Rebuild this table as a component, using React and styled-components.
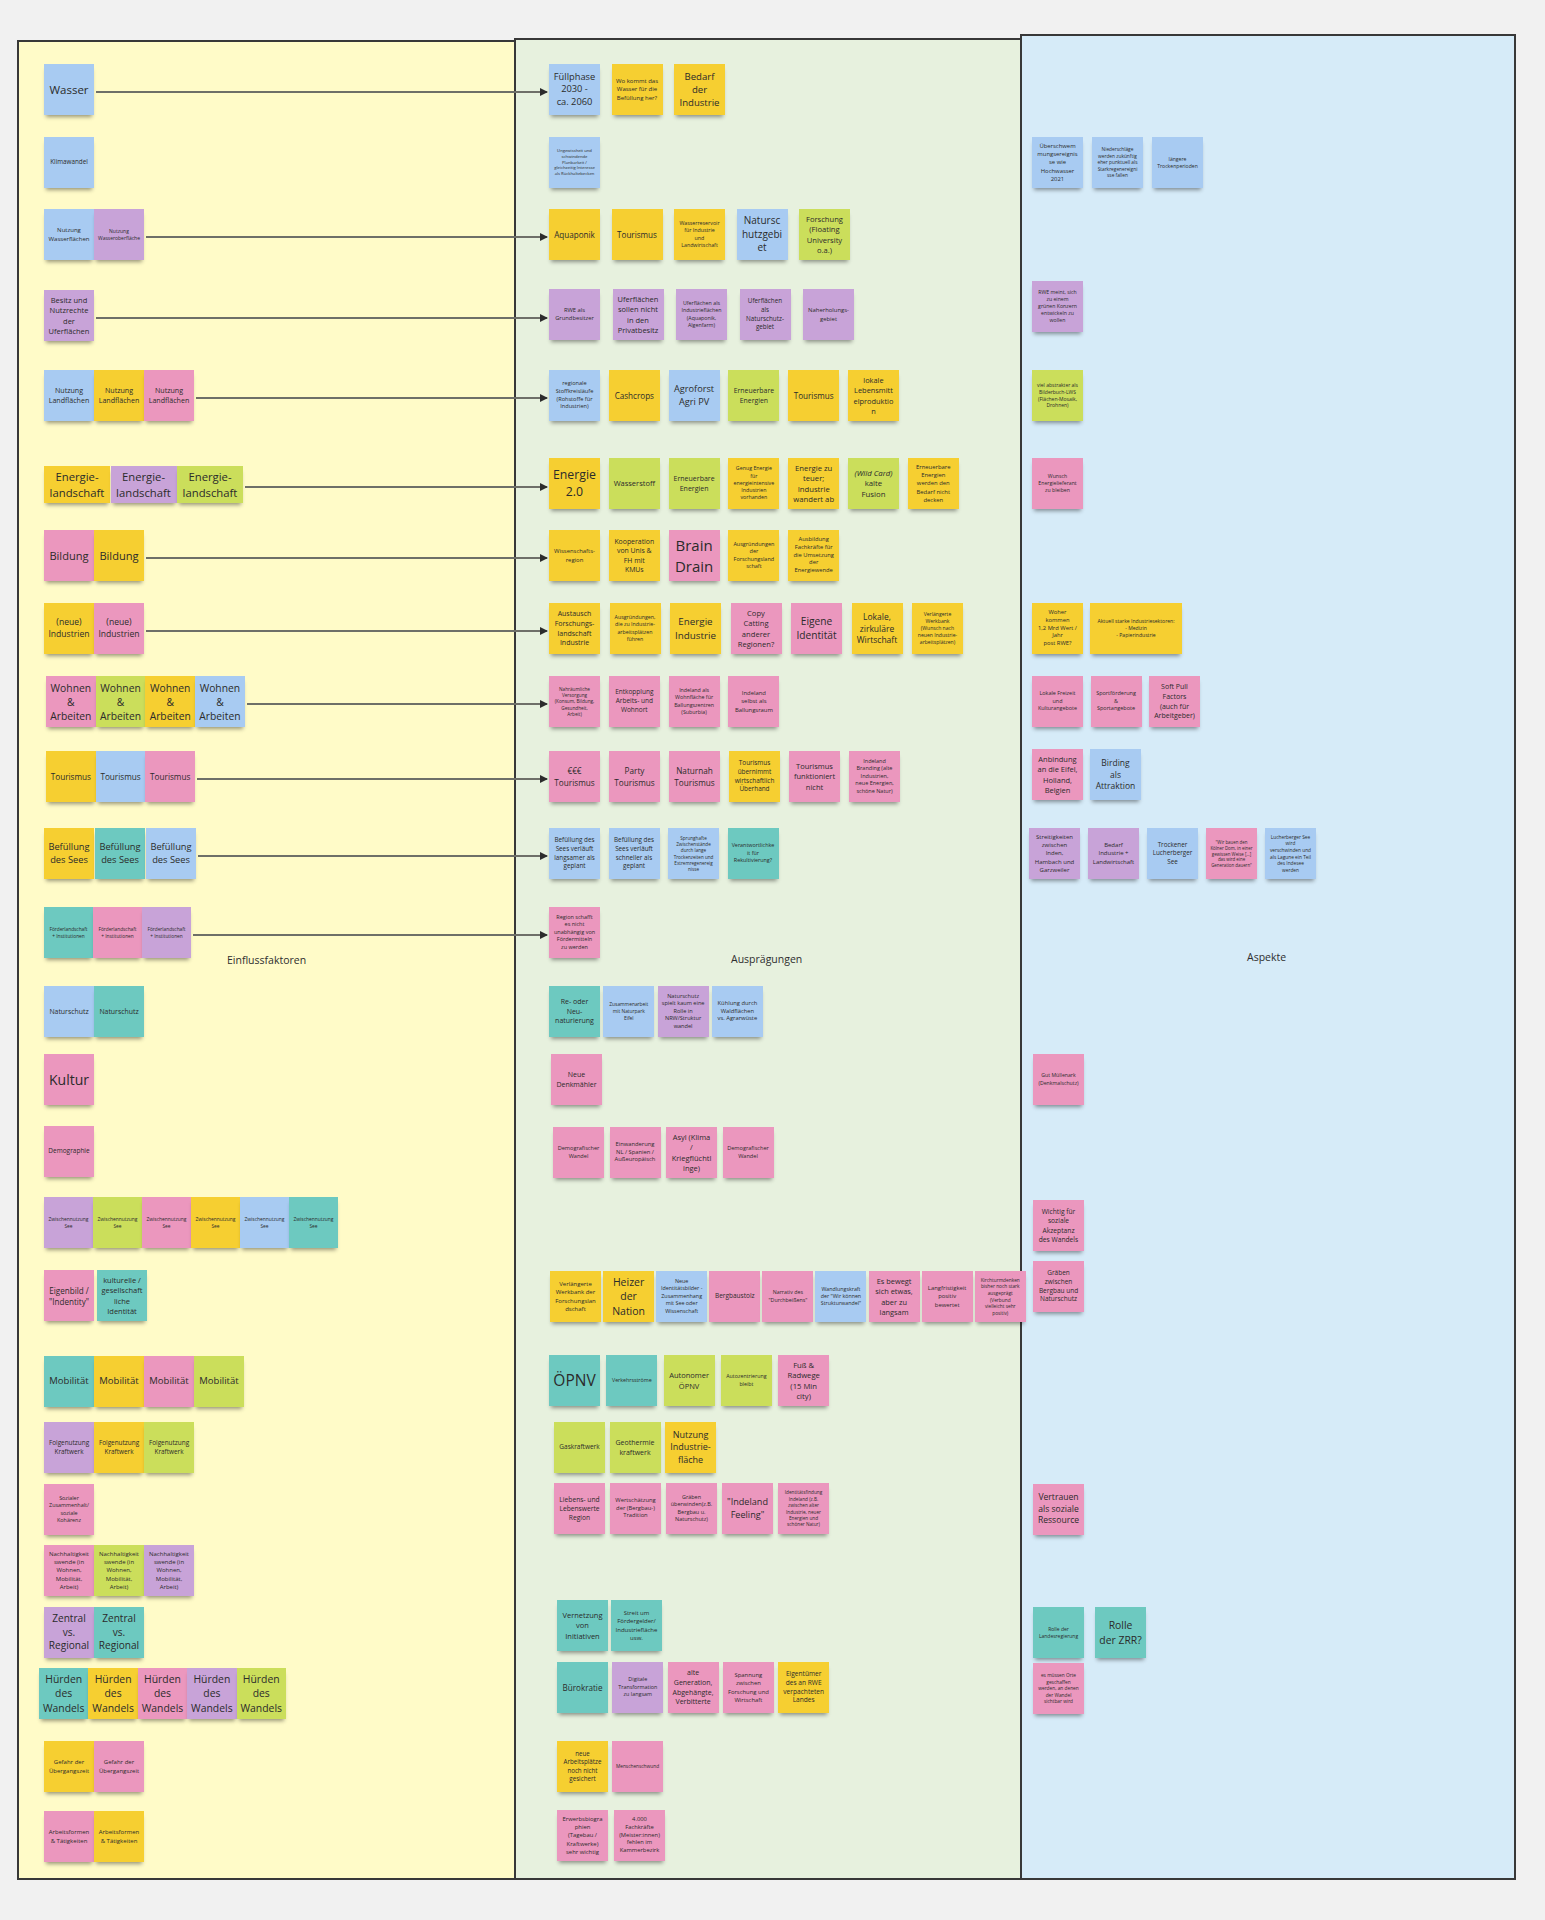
import React from 'react';
import styled, { createGlobalStyle } from 'styled-components';

const GlobalStyle = createGlobalStyle`
  html, body { margin: 0; padding: 0; background: #f1f1f1; }
  body { font-family: "Open Sans", "Noto Sans", sans-serif; }
  *, *::before, *::after { box-sizing: border-box; }
`;

const COLORS = {
  blue: '#a8cbf2',
  yellow: '#f6cf31',
  pink: '#eb97be',
  purple: '#c8a3d8',
  green: '#cbde5b',
  teal: '#6dc9c0',
};

const SLOTS = [64, 137, 209, 289, 370, 458, 530, 603, 676, 751, 828, 907, 986, 1054, 1126, 1197, 1270, 1355, 1422, 1484, 1545, 1604, 1665, 1741, 1810];
const END = 1862;

const Board = styled.div`
  width: 1545px;
  min-height: 1920px;
  display: flex;
  align-items: flex-start;
  padding-left: 17px;
`;

const Panel = styled.section`
  flex: none;
  width: ${(p) => p.$w}px;
  height: ${(p) => 1880 - p.$top}px;
  margin-top: ${(p) => p.$top}px;
  background: ${(p) => p.$bg};
  border: 2px solid #383838;
  border-right: ${(p) => (p.$openRight ? 'none' : '2px solid #383838')};
  padding-top: ${(p) => 64 - p.$top - 2}px;
  padding-left: ${(p) => p.$pl}px;
  display: flex;
  flex-direction: column;
`;

const Row = styled.div`
  flex: none;
  height: ${(p) => p.$h}px;
  display: flex;
  align-items: flex-start;
`;

const NoteGroup = styled.div`
  flex: none;
  display: flex;
  gap: ${(p) => p.$gap}px;
  margin-left: ${(p) => p.$indent}px;
  margin-top: ${(p) => p.$dy}px;
`;

const Sticky = styled.div`
  position: relative;
  flex: none;
  width: ${(p) => p.$w}px;
  height: ${(p) => p.$h}px;
  background: ${(p) => p.$bg};
  display: flex;
  align-items: center;
  justify-content: center;
  box-shadow: 0 4px 4px -2px rgba(0, 0, 0, 0.4);
`;

const StickyText = styled.span`
  flex: none;
  display: block;
  font-size: ${(p) => p.$fs}px;
  line-height: 1.36;
  color: #2b2b2b;
  text-align: center;
  white-space: pre;
  i { font-style: italic; }
`;

const Tail = styled.div`
  flex: 1;
  min-width: 0;
  align-self: stretch;
  display: flex;
  flex-direction: column;
`;

const Connector = styled.div`
  position: relative;
  flex: none;
  height: 2px;
  margin: ${(p) => p.$y}px -33px 0 2px;
  background: #6e6f68;
  &::after {
    content: '';
    position: absolute;
    right: -1px;
    top: -3px;
    border-left: 8px solid #2c2c2c;
    border-top: 4px solid transparent;
    border-bottom: 4px solid transparent;
  }
`;

const ZoneLabel = styled.span`
  flex: none;
  align-self: flex-start;
  font-size: 10.5px;
  line-height: 14px;
  color: #2e2e2e;
  white-space: nowrap;
  margin-left: ${(p) => p.$x}px;
  margin-top: ${(p) => p.$y}px;
`;

const many = (text, colors, fs) => colors.map((c) => [text, c, fs]);

const LEFT = {
  0: { arrow: true, notes: [['Wasser', 'blue', 11.5]] },
  1: { notes: [['Klimawandel', 'blue', 6.3]] },
  2: { arrow: true, notes: [['Nutzung\nWasserflächen', 'blue', 6], ['Nutzung\nWasseroberfläche', 'purple', 5]] },
  3: { arrow: true, dy: 1, notes: [['Besitz und\nNutzrechte\nder\nUferflächen', 'purple', 7.5]] },
  4: { arrow: true, notes: many('Nutzung\nLandflächen', ['blue', 'yellow', 'pink'], 7.1) },
  5: { arrow: true, dy: 8, w: 66, h: 37, gap: 0.5, notes: many('Energie-\nlandschaft', ['yellow', 'purple', 'green'], 11.3) },
  6: { arrow: true, notes: many('Bildung', ['pink', 'yellow'], 11.1) },
  7: { arrow: true, notes: many('(neue)\nIndustrien', ['yellow', 'pink'], 8.6) },
  8: { arrow: true, indent: 2, w: 49.7, notes: many('Wohnen\n&\nArbeiten', ['pink', 'green', 'yellow', 'blue'], 10.3) },
  9: { arrow: true, indent: 2, w: 49.7, notes: many('Tourismus', ['yellow', 'blue', 'pink'], 8.2) },
  10: { arrow: true, gap: 1, notes: many('Befüllung\ndes Sees', ['yellow', 'teal', 'blue'], 9.3) },
  11: { arrow: true, w: 49, label: { text: 'Einflussfaktoren', x: 36, y: 17 }, notes: many('Förderlandschaft\n+ Institutionen', ['teal', 'pink', 'purple'], 4.8) },
  12: { notes: many('Naturschutz', ['blue', 'teal'], 6.9) },
  13: { notes: [['Kultur', 'pink', 14]] },
  14: { notes: [['Demographie', 'pink', 6.5]] },
  15: { w: 49, notes: many('Zwischennutzung\nSee', ['purple', 'green', 'pink', 'yellow', 'blue', 'teal'], 4.9) },
  16: { gap: 3, notes: [['Eigenbild /\n"Indentity"', 'pink', 8.1], ['kulturelle /\ngesellschaft\nliche\nIdentität', 'teal', 7.5]] },
  17: { dy: 1, notes: many('Mobilität', ['teal', 'yellow', 'pink', 'green'], 9.5) },
  18: { notes: many('Folgenutzung\nKraftwerk', ['purple', 'yellow', 'green'], 6.4) },
  19: { notes: [['Sozialer\nZusammenhalt/\nsoziale\nKohärenz', 'pink', 5.4]] },
  20: { notes: many('Nachhaltigkeit\nswende (in\nWohnen,\nMobilität,\nArbeit)', ['pink', 'green', 'purple'], 6) },
  21: { dy: 3, notes: many('Zentral\nvs.\nRegional', ['purple', 'teal'], 10.1) },
  22: { dy: 3, indent: -5, w: 49.4, notes: many('Hürden\ndes\nWandels', ['teal', 'yellow', 'pink', 'purple', 'green'], 10.4) },
  23: { notes: many('Gefahr der\nÜbergangszeit', ['yellow', 'pink'], 6) },
  24: { dy: 1, notes: many('Arbeitsformen\n& Tätigkeiten', ['pink', 'yellow'], 6) },
};

const MIDDLE = {
  0: { gap: 11.5, notes: [['Füllphase\n2030 -\nca. 2060', 'blue', 9.3], ['Wo kommt das\nWasser für die\nBefüllung her?', 'yellow', 6], ['Bedarf\nder\nIndustrie', 'yellow', 9.6]] },
  1: { notes: [['Ungewissheit und\nschwindende\nPlanbarkeit /\ngleichzeitig Interesse\nals Rückhaltebecken', 'blue', 4.2]] },
  2: { gap: 11.5, notes: [['Aquaponik', 'yellow', 8.1], ['Tourismus', 'yellow', 8.1], ['Wasserreservoir\nfür Industrie\nund\nLandwirtschaft', 'yellow', 5.3], ['Natursc\nhutzgebi\net', 'blue', 10], ['Forschung\n(Floating\nUniversity\no.a.)', 'green', 7.6]] },
  3: { gap: 12.5, notes: [['RWE als\nGrundbesitzer', 'purple', 5.8], ['Uferflächen\nsollen nicht\nin den\nPrivatbesitz', 'purple', 7.5], ['Uferflächen als\nIndustrieflächen\n(Aquaponik,\nAlgenfarm)', 'purple', 5.3], ['Uferflächen\nals\nNaturschutz-\ngebiet', 'purple', 6.3], ['Naherholungs-\ngebiet', 'purple', 5.9]] },
  4: { gap: 8.8, notes: [['regionale\nStoffkreisläufe\n(Rohstoffe für\nIndustrien)', 'blue', 5.6], ['Cashcrops', 'yellow', 8.1], ['Agroforst\nAgri PV', 'blue', 9.2], ['Erneuerbare\nEnergien', 'green', 6.9], ['Tourismus', 'yellow', 8.1], ['lokale\nLebensmitt\nelproduktio\nn', 'yellow', 7.4]] },
  5: { gap: 8.8, notes: [['Energie\n2.0', 'yellow', 12.3], ['Wasserstoff', 'green', 7.5], ['Erneuerbare\nEnergien', 'green', 7], ['Genug Energie\nfür\nenergieintensive\nIndustrien\nvorhanden', 'yellow', 5.3], ['Energie zu\nteuer;\nIndustrie\nwandert ab', 'yellow', 7.7], [<><i>(Wild Card)</i>{'\nkalte\nFusion'}</>, 'green', 7.8], ['Erneuerbare\nEnergien\nwerden den\nBedarf nicht\ndecken', 'yellow', 5.9]] },
  6: { gap: 8.8, notes: [['Wissenschafts-\nregion', 'yellow', 5.9], ['Kooperation\nvon Unis &\nFH mit\nKMUs', 'yellow', 6.9], ['Brain\nDrain', 'pink', 15], ['Ausgründungen\nder\nForschungsland\nschaft', 'yellow', 5.5], ['Ausbildung\nFachkräfte für\ndie Umsetzung\nder\nEnergiewende', 'yellow', 5.8]] },
  7: { gap: 9.5, notes: [['Austausch\nForschungs-\nlandschaft\nIndustrie', 'yellow', 7], ['Ausgründungen,\ndie zu Industrie-\narbeitsplätzen\nführen', 'yellow', 5.3], ['Energie\nIndustrie', 'yellow', 9.8], ['Copy\nCatting\nanderer\nRegionen?', 'pink', 7.6], ['Eigene\nIdentität', 'pink', 10.2], ['Lokale,\nzirkuläre\nWirtschaft', 'yellow', 8.5], ['Verlängerte\nWerkbank\n(Wunsch nach\nneuen Industrie-\narbeitsplätzen)', 'yellow', 5.1]] },
  8: { gap: 8.8, notes: [['Nahräumliche\nVersorgung\n(Konsum, Bildung,\nGesundheit,\nArbeit)', 'pink', 4.7], ['Entkopplung\nArbeits- und\nWohnort', 'pink', 6.5], ['Indeland als\nWohnfläche für\nBallungszentren\n(Suburbia)', 'pink', 5.3], ['Indeland\nselbst als\nBallungsraum', 'pink', 5.9]] },
  9: { gap: 9, notes: [['€€€\nTourismus', 'pink', 8.2], ['Party\nTourismus', 'pink', 8.2], ['Naturnah\nTourismus', 'pink', 8.2], ['Tourismus\nübernimmt\nwirtschaftlich\nÜberhand', 'yellow', 6.4], ['Tourismus\nfunktioniert\nnicht', 'pink', 7.5], ['Indeland\nBranding (alte\nIndustrien,\nneue Energien,\nschöne Natur)', 'pink', 5.5]] },
  10: { gap: 8.5, notes: [['Befüllung des\nSees verläuft\nlangsamer als\ngeplant', 'blue', 6.3], ['Befüllung des\nSees verläuft\nschneller als\ngeplant', 'blue', 6.3], ['Sprunghafte\nZwischenstände\ndurch lange\nTrockenzeiten und\nExtremregenereig\nnisse', 'blue', 4.6], ['Verantwortlichke\nit für\nRekultivierung?', 'teal', 5.4]] },
  11: { label: { text: 'Ausprägungen', x: 131, y: 45 }, notes: [['Region schafft\nes nicht\nunabhängig von\nFördermitteln\nzu werden', 'pink', 5.5]] },
  12: { gap: 3.3, notes: [['Re- oder\nNeu-\nnaturierung', 'teal', 7], ['Zusammenarbeit\nmit Naturpark\nEifel', 'blue', 4.9], ['Naturschutz\nspielt kaum eine\nRolle in\nNRW/Struktur\nwandel', 'purple', 5.6], ['Kühlung durch\nWaldflächen\nvs. Agrarwüste', 'blue', 5.8]] },
  13: { indent: 2, notes: [['Neue\nDenkmähler', 'pink', 7]] },
  14: { dy: 1, indent: 4, gap: 5.5, notes: [['Demografischer\nWandel', 'pink', 5.6], ['Einwanderung\nNL / Spanien /\nAußeuropäisch', 'pink', 5.8], ['Asyl (Klima\n/\nKriegflüchtl\ninge)', 'pink', 7.5], ['Demografischer\nWandel', 'pink', 5.6]] },
  16: { dy: 1, indent: 1, gap: 2.1, notes: [['Verlängerte\nWerkbank der\nForschungslan\ndschaft', 'yellow', 6], ['Heizer\nder\nNation', 'yellow', 10.5], ['Neue\nIdentitätsbilder -\nZusammenhang\nmit See oder\nWissenschaft', 'blue', 5.4], ['Bergbaustolz', 'pink', 6.5], ['Narrativ des\n"Durchbeißens"', 'pink', 5.3], ['Wandlungskraft\nder "Wir können\nStrukturwandel"', 'blue', 5.3], ['Es bewegt\nsich etwas,\naber zu\nlangsam', 'pink', 7.4], ['Langfristigkeit\npositiv\nbewertet', 'pink', 5.9], ['Kirchturmdenken\nbisher noch stark\nausgeprägt\n(Verbund\nvielleicht sehr\npositiv)', 'pink', 4.8]] },
  17: { gap: 6.3, notes: [['ÖPNV', 'teal', 15.5], ['Verkehrsströme', 'teal', 5.3], ['Autonomer\nÖPNV', 'green', 7.5], ['Autozentrierung\nbleibt', 'green', 5.3], ['Fuß &\nRadwege\n(15 Min\ncity)', 'pink', 7.7]] },
  18: { indent: 5, gap: 4.5, notes: [['Gaskraftwerk', 'green', 6.5], ['Geothermie\nkraftwerk', 'green', 7], ['Nutzung\nIndustrie-\nfläche', 'yellow', 9]] },
  19: { dy: -1, indent: 5, gap: 5, notes: [['Liebens- und\nLebenswerte\nRegion', 'pink', 6.7], ['Wertschätzung\nder (Bergbau-)\nTradition', 'pink', 5.8], ['Gräben\nüberwinden(z.B.\nBergbau u.\nNaturschutz)', 'pink', 5.5], ['"Indeland\nFeeling"', 'pink', 9.1], ['Identitätsfindung\nIndeland (z.B.\nzwischen alter\nIndustrie, neuer\nEnergien und\nschöner Natur)', 'pink', 4.7]] },
  21: { dy: -4, indent: 8, gap: 3, notes: [['Vernetzung\nvon\nInitiativen', 'teal', 7.5], ['Streit um\nFördergelder/\nIndustriefläche\nusw.', 'teal', 6]] },
  22: { dy: -3, indent: 8, gap: 4.3, notes: [['Bürokratie', 'teal', 8.1], ['Digitale\nTransformation\nzu langsam', 'purple', 5.4], ['alte\nGeneration,\nAbgehängte,\nVerbitterte', 'pink', 7], ['Spannung\nzwischen\nForschung und\nWirtschaft', 'pink', 5.9], ['Eigentümer\ndes an RWE\nverpachteten\nLandes', 'yellow', 6.6]] },
  23: { indent: 8, gap: 4, notes: [['neue\nArbeitsplätze\nnoch nicht\ngesichert', 'yellow', 6.2], ['Menschenschwund', 'pink', 4.8]] },
  24: { indent: 8, gap: 6, notes: [['Erwerbsbiogra\nphien\n(Tagebau /\nKraftwerke)\nsehr wichtig', 'pink', 5.9], ['4.000\nFachkräfte\n(Meister:innen)\nfehlen im\nKammerbezirk', 'pink', 5.8]] },
};

const RIGHT = {
  1: { gap: 9, notes: [['Überschwem\nmungsereignis\nse wie\nHochwasser\n2021', 'blue', 5.9], ['Niederschläge\nwerden zukünftig\neher punktuell als\nStarkregenereigni\nsse fallen', 'blue', 4.8], ['längere\nTrockenperioden', 'blue', 5.1]] },
  3: { dy: -8, notes: [['RWE meint, sich\nzu einem\ngrünen Konzern\nentwickeln zu\nwollen', 'purple', 5.2]] },
  4: { notes: [['viel abstrakter als\nBilderbuch-LWS\n(Flächen-Mosaik,\nDrohnen)', 'green', 5]] },
  5: { notes: [['Wunsch\nEnergielieferant\nzu bleiben', 'pink', 5.2]] },
  7: { gap: 7, notes: [['Woher\nkommen\n1,2 Mrd Wert /\nJahr\npost RWE?', 'yellow', 5.8], ['Aktuell starke Industriesektoren:\n- Medizin\n- Papierindustrie', 'yellow', 5.1, 92]] },
  8: { gap: 7.5, notes: [['Lokale Freizeit\nund\nKulturangebote', 'pink', 5.4], ['Sportförderung\n&\nSportangebote', 'pink', 5.5], ['Soft Pull\nFactors\n(auch für\nArbeitgeber)', 'pink', 7]] },
  9: { dy: -2, gap: 7, notes: [['Anbindung\nan die Eifel,\nHolland,\nBelgien', 'pink', 7.5], ['Birding\nals\nAttraktion', 'blue', 8.5]] },
  10: { indent: -3, gap: 8, notes: [['Streitigkeiten\nzwischen\nInden,\nHambach und\nGarzweiler', 'purple', 6], ['Bedarf\nIndustrie +\nLandwirtschaft', 'purple', 6], ['Trockener\nLucherberger\nSee', 'blue', 6.3], ['"Wir bauen den\nKölner Dom, in einer\ngewissen Weise […]\ndas wird eine\nGeneration dauern"', 'pink', 4.4], ['Lucherberger See\nwird\nverschwinden und\nals Lagune ein Teil\ndes Indesee\nwerden', 'blue', 4.8]] },
  11: { label: { text: 'Aspekte', x: 215, y: 43 }, notes: [] },
  13: { indent: 1, notes: [['Gut Müllenark\n(Denkmalschutz)', 'pink', 5.2]] },
  15: { dy: 3, indent: 1, notes: [['Wichtig für\nsoziale\nAkzeptanz\ndes Wandels', 'pink', 6.7]] },
  16: { dy: -9, indent: 1, notes: [['Gräben\nzwischen\nBergbau und\nNaturschutz', 'pink', 6.5]] },
  19: { indent: 1, notes: [['Vertrauen\nals soziale\nRessource', 'pink', 8.6]] },
  21: { dy: 3, indent: 1, gap: 11, notes: [['Rolle der\nLandesregierung', 'teal', 5], ['Rolle\nder ZRR?', 'teal', 10.4]] },
  22: { dy: -2, indent: 1, notes: [['es müssen Orte\ngeschaffen\nwerden, an denen\nder Wandel\nsichtbar wird', 'pink', 4.8]] },
};

function Lane({ rows, noteW }) {
  return SLOTS.map((top, i) => {
    const r = rows[i];
    const h = (i + 1 < SLOTS.length ? SLOTS[i + 1] : END) - top;
    if (!r) return <Row key={i} $h={h} />;
    const w = r.w || noteW;
    const nh = r.h || 51;
    const dy = r.dy || 0;
    const label = r.label && <ZoneLabel $x={r.label.x} $y={r.label.y}>{r.label.text}</ZoneLabel>;
    return (
      <Row key={i} $h={h}>
        {r.notes.length > 0 && (
          <NoteGroup $gap={r.gap || 0} $indent={r.indent || 0} $dy={dy}>
            {r.notes.map(([text, color, fs, wide], k) => (
              <Sticky key={k} $w={wide || w} $h={nh} $bg={COLORS[color]}>
                <StickyText $fs={fs}>{text}</StickyText>
              </Sticky>
            ))}
          </NoteGroup>
        )}
        {r.arrow ? (
          <Tail>
            <Connector $y={dy + nh / 2 + 1} />
            {label}
          </Tail>
        ) : (
          label
        )}
      </Row>
    );
  });
}

export default function App() {
  return (
    <>
      <GlobalStyle />
      <Board>
        <Panel $w={497} $top={40} $bg="#fffbc8" $pl={25} $openRight>
          <Lane rows={LEFT} noteW={50} />
        </Panel>
        <Panel $w={506} $top={38} $bg="#e7f1de" $pl={33} $openRight>
          <Lane rows={MIDDLE} noteW={51} />
        </Panel>
        <Panel $w={496} $top={34} $bg="#d6ebf8" $pl={10}>
          <Lane rows={RIGHT} noteW={51} />
        </Panel>
      </Board>
    </>
  );
}
